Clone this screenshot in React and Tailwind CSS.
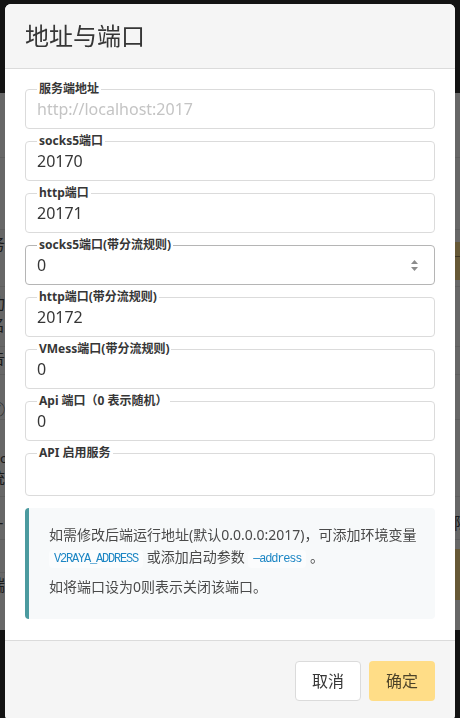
import React from "react";

const FONT = { fontFamily: '"Noto Sans", "Noto Sans CJK SC", sans-serif' };
const MONO = { fontFamily: '"Liberation Mono", "DejaVu Sans Mono", monospace' };

function Field({ label, value, placeholder, hover, spinner, tall }) {
  const box = hover
    ? "flex items-center rounded border border-[#b5b5b5] bg-white pl-[11px] pr-4"
    : "flex items-center rounded border border-[#dbdbdb] bg-white pl-[11px] pr-4";
  return (
    <div className="relative mb-3">
      <div className={tall ? box + " h-[43px]" : box + " h-10"}>
        {tall ? null : (
          <input
            readOnly
            value={value || ""}
            placeholder={placeholder}
            className="min-w-0 flex-1 bg-transparent text-[16px] leading-6 text-[#363636] outline-none placeholder:text-[#c4c4c4]"
            style={FONT}
          />
        )}
        {spinner ? (
          <svg width="7" height="16" viewBox="0 0 7 16" className="shrink-0">
            <path d="M3.5 3 L7 7 L0 7 Z" fill="#8c8c8c" />
            <path d="M0 10 L7 10 L3.5 14 Z" fill="#8c8c8c" />
          </svg>
        ) : null}
      </div>
      <label className="absolute left-3 top-[-9px] bg-white px-[2px] text-[12px] font-bold leading-[18px] text-[#363636]">
        {label}
      </label>
    </div>
  );
}

function BgRow({ h }) {
  return <div className={"border-b border-[#5e5e5e] " + h} />;
}

export default function App() {
  return (
    <div className="relative h-[718px] w-[460px] overflow-hidden bg-[#676767]" style={FONT}>
      {/* dimmed settings page behind the dialog */}
      <div className="flex h-full flex-col">
        <div className="h-[93px] bg-[#131313]" />
        <div className="flex flex-1 flex-col bg-[#676767]">
          <BgRow h="h-[65px]" />
          <BgRow h="h-[72px]" />
          <div className="flex h-[57px] items-start justify-between border-b border-[#5e5e5e]">
            <span className="-ml-[11px] mt-[4px] text-[16px] leading-5 text-[#1a1a1a]">务</span>
            <span className="mt-[12px] flex h-[38px] w-[5px] flex-col bg-[#665836]">
              <span className="mt-[14px] h-px bg-[#3e3522]" />
            </span>
          </div>
          <div className="flex h-[60px] flex-col border-b border-[#5e5e5e]">
            <span className="-ml-[11px] mt-[6px] text-[16px] leading-5 text-[#1a1a1a]">功</span>
            <span className="-ml-[11px] mt-[2px] text-[16px] leading-5 text-[#1a1a1a]">名</span>
          </div>
          <div className="flex h-[28px] border-b border-[#5e5e5e]">
            <span className="-ml-[11px] mt-[1px] text-[16px] leading-5 text-[#1a1a1a]">告</span>
          </div>
          <div className="flex h-[45px] border-b border-[#5e5e5e]">
            <span className="-ml-[10px] mt-[26px] text-[15px] leading-4 text-[#1a1a1a]">⑦</span>
          </div>
          <div className="flex h-[77px] flex-col border-b border-[#5e5e5e]">
            <span className="-ml-[8px] mt-[30px] text-[13px] leading-4 text-[#1a1a1a]">po</span>
            <span className="-ml-[11px] mt-[2px] text-[16px] leading-5 text-[#1a1a1a]">统</span>
          </div>
          <div className="flex h-[43px] items-start justify-between border-b border-[#5e5e5e]">
            <span className="-ml-[6px] mt-[22px] text-[16px] leading-5 text-[#1a1a1a]">T</span>
            <span className="-mr-[10px] mt-[16px] text-[16px] leading-5 text-[#1a1a1a]">除</span>
          </div>
          <div className="flex h-[33px] items-start justify-end border-b border-[#5e5e5e]">
            <span className="mt-[9px] h-[24px] w-[5px] bg-[#665836]" />
          </div>
          <div className="flex flex-1 items-start justify-between">
            <span className="-ml-[11px] mt-[2px] text-[16px] leading-5 text-[#1a1a1a]">端</span>
            <span className="h-[27px] w-[5px] bg-[#665836]" />
          </div>
        </div>
        <div className="h-[88px] bg-[#131313]" />
      </div>

      {/* modal card */}
      <div className="fixed left-[5px] top-[4px] flex w-[450px] flex-col overflow-hidden rounded-[6px] bg-white">
        <header className="border-b border-[#dbdbdb] bg-[#f5f5f5] p-5">
          <p className="text-[24px] leading-6 text-[#363636]">地址与端口</p>
        </header>

        <section className="px-5 pb-[21px] pt-5">
          <Field label="服务端地址" placeholder="http://localhost:2017" />
          <Field label="socks5端口" value="20170" />
          <Field label="http端口" value="20171" />
          <Field label="socks5端口(带分流规则)" value="0" hover spinner />
          <Field label="http端口(带分流规则)" value="20172" />
          <Field label="VMess端口(带分流规则)" value="0" />
          <Field label="Api 端口（0 表示随机）" value="0" />
          <Field label="API 启用服务" tall />

          <div className="rounded border-l-4 border-[#4b9a9f] bg-[#f7f9fa] pb-[21px] pl-5 pr-3 pt-4 text-[14px] leading-[22px] text-[#4a4a4a]">
            <p className="mb-[6px]">
              如需修改后端运行地址(默认0.0.0.0:2017)，可添加环境变量{" "}
              <code
                className="rounded bg-[#fbfcfd] px-[5px] py-[2px] text-[12px] tracking-[-1.2px] text-[#1d86c4]"
                style={MONO}
              >
                V2RAYA_ADDRESS
              </code>{" "}
              或添加启动参数{" "}
              <code
                className="rounded bg-[#fbfcfd] px-[5px] py-[2px] text-[12px] tracking-[-1.2px] text-[#1d86c4]"
                style={MONO}
              >
                —address
              </code>{" "}
              。
            </p>
            <p>如将端口设为0则表示关闭该端口。</p>
          </div>
        </section>

        <footer className="flex justify-end gap-2 border-t border-[#dbdbdb] bg-[#f5f5f5] p-5">
          <button className="h-10 rounded border border-[#dbdbdb] bg-white px-4 text-[16px] text-[#363636]">
            取消
          </button>
          <button className="h-10 rounded border border-transparent bg-[#ffdd87] px-4 text-[16px] text-black/70">
            确定
          </button>
        </footer>
      </div>
    </div>
  );
}
